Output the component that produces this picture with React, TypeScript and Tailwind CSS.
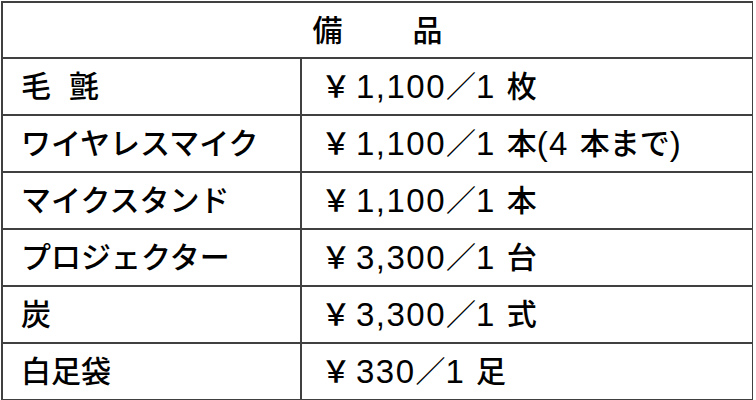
import React from "react";

function Price({ parts }: { parts: { t: string; latin?: boolean; gap?: boolean }[] }) {
  return (
    <>
      {parts.map((p, i) =>
        p.gap ? (
          <span key={i} className="inline-block w-[5px]" />
        ) : p.latin ? (
          <span key={i} className="text-[33px] font-normal tracking-[1.5px]">
            {p.t}
          </span>
        ) : (
          <span key={i}>{p.t}</span>
        )
      )}
    </>
  );
}

const G = { t: "", gap: true };
const L = (t: string) => ({ t, latin: true });
const J = (t: string) => ({ t });

const rows: [React.ReactNode, React.ReactNode][] = [
  [
    <>
      <span>毛</span>
      <span className="inline-block w-[18px]" />
      <span>氈</span>
    </>,
    <Price parts={[J("￥"), G, L("1,100"), J("／"), L("1 "), J("枚")]} />,
  ],
  [
    "ワイヤレスマイク",
    <Price parts={[J("￥"), G, L("1,100"), J("／"), L("1 "), J("本"), L("(4 "), J("本まで"), L(")")]} />,
  ],
  ["マイクスタンド", <Price parts={[J("￥"), G, L("1,100"), J("／"), L("1 "), J("本")]} />],
  ["プロジェクター", <Price parts={[J("￥"), G, L("3,300"), J("／"), L("1 "), J("台")]} />],
  ["炭", <Price parts={[J("￥"), G, L("3,300"), J("／"), L("1 "), J("式")]} />],
  ["白足袋", <Price parts={[J("￥"), G, L("330"), J("／"), L("1 "), J("足")]} />],
];

export default function App() {
  return (
    <div
      className="w-[756px] h-[400px] bg-white pl-[1px] pt-[1px] text-black"
      style={{ fontFamily: '"Liberation Sans", "Noto Sans CJK JP", sans-serif' }}
    >
      <div className="w-[752px] border-l-2 border-t-2 border-r border-b-2 border-[#404040]">
        <div className="h-[56px] flex items-center justify-center gap-[70px] text-[30px] font-medium border-b-2 border-[#404040]">
          <span>備</span>
          <span>品</span>
        </div>
        {rows.map(([a, b], i) => (
          <div
            key={i}
            className={
              i < rows.length - 1
                ? "grid grid-cols-[299px_1fr] h-[57px] border-b-2 border-[#404040]"
                : "grid grid-cols-[299px_1fr] h-[55px]"
            }
          >
            <div className="flex items-center pl-[18px] text-[30px] font-medium border-r-2 border-[#404040] whitespace-pre">
              {a}
            </div>
            <div className="flex items-center pl-[19px] text-[30px] font-medium whitespace-pre">{b}</div>
          </div>
        ))}
      </div>
    </div>
  );
}
